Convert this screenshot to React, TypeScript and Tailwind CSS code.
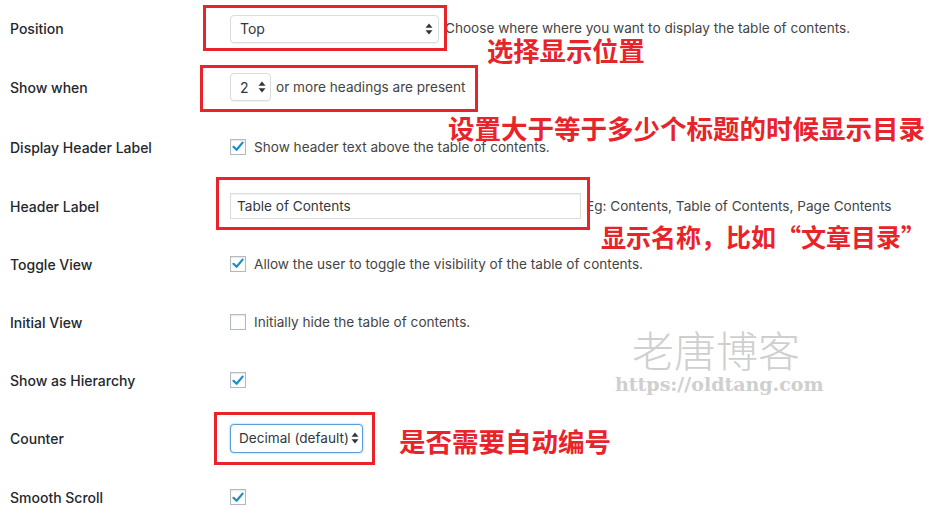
import React from "react";

type Row = { label: string; h: string; control: React.ReactNode };

function Updown({ className = "" }: { className?: string }) {
  return (
    <svg width="8" height="12" viewBox="0 0 8 12" className={className}>
      <path d="M4 0.5 L7.5 4.8 L0.5 4.8 Z" fill="#32373c" />
      <path d="M4 11.5 L7.5 7.2 L0.5 7.2 Z" fill="#32373c" />
    </svg>
  );
}

function Check({ on }: { on: boolean }) {
  return (
    <span className="w-4 h-4 shrink-0 border border-[#b4b9be] bg-white flex items-center justify-center shadow-[inset_0_1px_2px_rgba(0,0,0,0.1)]">
      {on && (
        <svg width="12" height="11" viewBox="0 0 12 11">
          <path d="M1.5 5.8 L4.6 8.8 L10.6 1.6" stroke="#1e8cbe" strokeWidth="2.2" fill="none" strokeLinecap="round" strokeLinejoin="round" />
        </svg>
      )}
    </span>
  );
}

function CheckRow({ on, text }: { on: boolean; text?: string }) {
  return (
    <div className="flex items-center gap-2">
      <Check on={on} />
      {text && <span className="text-[13.6px] text-[#444]">{text}</span>}
    </div>
  );
}

export default function App() {
  const rows: Row[] = [
    {
      label: "Position",
      h: "h-[57px]",
      control: (
        <div className="flex items-center">
          <div className="w-[209px] h-[28px] rounded-[4px] border border-[#dcdcdc] bg-white shadow-[0_1px_1px_rgba(0,0,0,0.06)] flex items-center justify-between pl-[9px] pr-[5px] text-[14px] text-[#32373c]">
            <span>Top</span>
            <Updown />
          </div>
          <span className="ml-[6px] whitespace-nowrap text-[13.6px] text-[#444]">Choose where where you want to display the table of contents.</span>
        </div>
      ),
    },
    {
      label: "Show when",
      h: "h-[60px]",
      control: (
        <div className="flex items-center">
          <div className="w-[41px] h-[28px] rounded-[4px] border border-[#dcdcdc] bg-white shadow-[0_1px_1px_rgba(0,0,0,0.06)] flex items-center justify-between pl-[9px] pr-[4px] text-[14px] text-[#32373c]">
            <span>2</span>
            <Updown />
          </div>
          <span className="ml-[5px] text-[13.6px] text-[#444]">or more headings are present</span>
        </div>
      ),
    },
    {
      label: "Display Header Label",
      h: "h-[60px]",
      control: <CheckRow on text="Show header text above the table of contents." />,
    },
    {
      label: "Header Label",
      h: "h-[58px]",
      control: (
        <div className="flex items-center">
          <div className="w-[351px] h-[26px] border border-[#dcdcdc] bg-white shadow-[inset_0_1px_2px_rgba(0,0,0,0.07)] flex items-center pl-[6px] text-[13.6px] text-[#32373c]">
            Table of Contents
          </div>
          <span className="ml-[5px] whitespace-nowrap text-[13.6px] text-[#444]">Eg: Contents, Table of Contents, Page Contents</span>
        </div>
      ),
    },
    {
      label: "Toggle View",
      h: "h-[58px]",
      control: <CheckRow on text="Allow the user to toggle the visibility of the table of contents." />,
    },
    {
      label: "Initial View",
      h: "h-[58px]",
      control: <CheckRow on={false} text="Initially hide the table of contents." />,
    },
    { label: "Show as Hierarchy", h: "h-[58px]", control: <CheckRow on /> },
    {
      label: "Counter",
      h: "h-[58px]",
      control: (
        <div className="w-[133px] h-[29px] rounded-[4px] border border-[#5b9dd9] bg-white shadow-[0_0_2px_rgba(30,140,190,0.6)] flex items-center justify-between pl-[8px] pr-[3px] text-[13.6px] text-[#32373c] whitespace-nowrap">
          <span>Decimal (default)</span>
          <Updown />
        </div>
      ),
    },
    { label: "Smooth Scroll", h: "h-[60px]", control: <CheckRow on /> },
  ];

  return (
    <div className="relative w-[929px] h-[529px] bg-white overflow-hidden font-['Inter','Noto_Sans_CJK_SC',sans-serif]">
      <div className="flex flex-col">
        {rows.map((r) => (
          <div key={r.label} className={`flex items-center ${r.h}`}>
            <div className="w-[230px] pl-[10px] text-[14px] font-medium text-[#23282d]">{r.label}</div>
            <div className="flex-1">{r.control}</div>
          </div>
        ))}
      </div>

      {/* annotations */}
      <div className="absolute left-[203px] top-[5px] w-[244px] h-[46px] border-[3px] border-[#e8232a]" />
      <div className="absolute left-[200px] top-[65px] w-[278px] h-[47px] border-[3px] border-[#e8232a]" />
      <div className="absolute left-[216px] top-[177px] w-[374px] h-[53px] border-[3px] border-[#e8232a]" />
      <div className="absolute left-[214px] top-[412px] w-[161px] h-[53px] border-[3px] border-[#e8232a]" />

      <div className="absolute left-[487px] top-[33px] text-[26.3px] leading-[34px] font-bold text-[#e8232a] font-['Noto_Sans_CJK_SC',sans-serif] whitespace-nowrap">选择显示位置</div>
      <div className="absolute left-[448px] top-[111px] text-[26.5px] leading-[34px] font-bold text-[#e8232a] font-['Noto_Sans_CJK_SC',sans-serif] whitespace-nowrap">设置大于等于多少个标题的时候显示目录</div>
      <div className="absolute left-[601px] top-[219px] text-[25px] leading-[34px] font-bold text-[#e8232a] font-['Noto_Sans_CJK_SC',sans-serif] whitespace-nowrap">显示名称，比如“文章目录”</div>
      <div className="absolute left-[399px] top-[424px] text-[26.5px] leading-[34px] font-bold text-[#e8232a] font-['Noto_Sans_CJK_SC',sans-serif] whitespace-nowrap">是否需要自动编号</div>

      {/* watermark */}
      <div className="absolute left-[632px] top-[325px] text-[42px] leading-[48px] font-light text-[#cfcfcf] font-['Noto_Sans_CJK_SC',sans-serif] whitespace-nowrap">老唐博客</div>
      <div className="absolute left-[615px] top-[371px] text-[19px] leading-[26px] font-bold text-[#cfcfcf] font-['DejaVu_Serif',serif] whitespace-nowrap">https://oldtang.com</div>
    </div>
  );
}
